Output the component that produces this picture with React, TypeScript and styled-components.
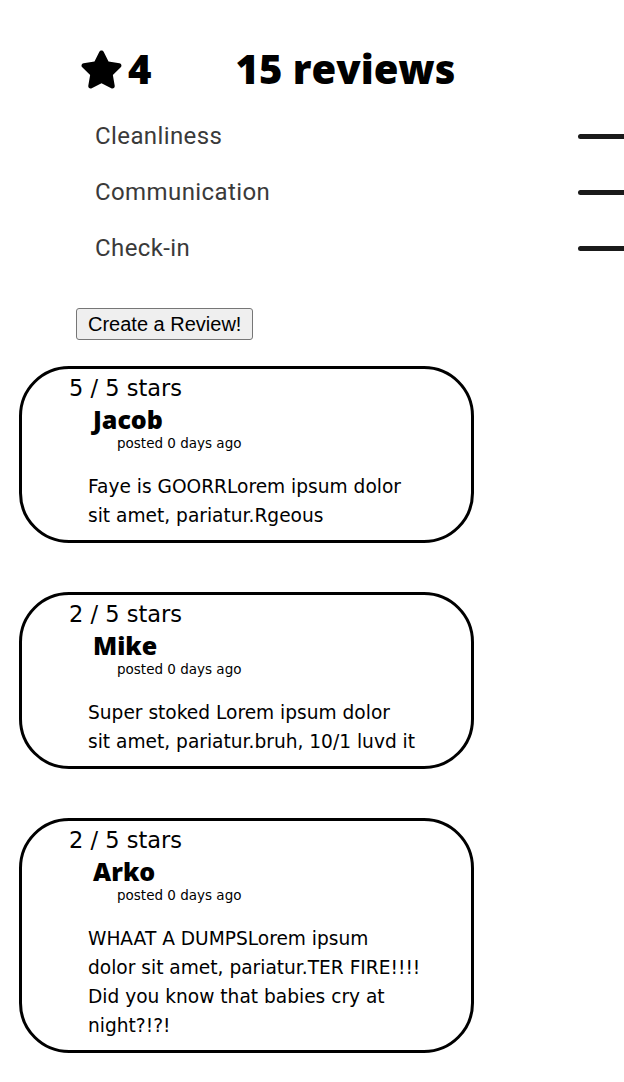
import styled, { createGlobalStyle } from "styled-components";
import { FaStar } from "react-icons/fa";

const GlobalStyle = createGlobalStyle`
    body {
        margin: 0;
        background: #fff;
        color: #000;
        overflow-x: hidden;
    }
`

const categories = ["Cleanliness", "Communication", "Check-in"];

// line breaks kept as in the design
const reviews = [
    { stars: 5, name: "Jacob", body: "Faye is GOORRLorem ipsum dolor\nsit amet, pariatur.Rgeous" },
    { stars: 2, name: "Mike", body: "Super stoked Lorem ipsum dolor\nsit amet, pariatur.bruh, 10/1 luvd it" },
    { stars: 2, name: "Arko", body: "WHAAT A DUMPSLorem ipsum\ndolor sit amet, pariatur.TER FIRE!!!!\nDid you know that babies cry at\nnight?!?!" },
];

export default function App() {
    return (
        <Page>
            <GlobalStyle />
            <Header>
                <Score>
                    <FaStar size={43} />
                    <span>4</span>
                </Score>
                <Count>15 reviews</Count>
            </Header>

            <Categories>
                {categories.map((c) => (
                    <CategoryRow key={c}>
                        <CategoryName>{c}</CategoryName>
                        <Bar />
                    </CategoryRow>
                ))}
            </Categories>

            <CreateButton>Create a Review!</CreateButton>

            <List>
                {reviews.map((r) => (
                    <Card key={r.name}>
                        <Stars>{r.stars} / 5 stars</Stars>
                        <Name>{r.name}</Name>
                        <Posted>posted 0 days ago</Posted>
                        <Body>{r.body}</Body>
                    </Card>
                ))}
            </List>
        </Page>
    )
}

const Page = styled.div`
    padding: 44px 0 30px 19px;
    font-family: "DejaVu Sans", sans-serif;
    overflow: hidden;
`

const Header = styled.div`
    display: flex;
    align-items: center;
    gap: 84px;
    padding-left: 61px;
    font-family: "Open Sans", sans-serif;
    font-weight: 800;
    font-size: 40px;
    line-height: 50px;
`

const Score = styled.div`
    display: flex;
    align-items: center;
    gap: 5px;
`

const Count = styled.div``

const Categories = styled.div`
    display: flex;
    flex-direction: column;
    margin-top: 14px;
    padding-left: 76px;
`

const CategoryRow = styled.div`
    display: flex;
    align-items: center;
    height: 56px;
`

const CategoryName = styled.div`
    width: 483px;
    flex-shrink: 0;
    font-family: "Roboto", sans-serif;
    font-size: 24px;
    letter-spacing: 0.4px;
    color: #3a3a3a;
`

const Bar = styled.div`
    width: 80px;
    height: 5px;
    border-radius: 3px;
    background: #1a1a1a;
    flex-shrink: 0;
`

const CreateButton = styled.button`
    display: block;
    margin: 32px 0 0 57px;
    height: 32px;
    padding: 0 11px;
    font-family: "Liberation Sans", Arial, sans-serif;
    font-size: 20px;
    color: #000;
    background: #efefef;
    border: 1px solid #767676;
    border-radius: 3px;
`

const List = styled.div`
    display: flex;
    flex-direction: column;
    gap: 49px;
    margin-top: 26px;
`

const Card = styled.div`
    width: 455px;
    box-sizing: border-box;
    border: 3px solid #000;
    border-radius: 50px;
    padding: 3px 20px 10px 47px;
`

const Stars = styled.div`
    font-size: 22.5px;
    line-height: 32px;
    font-weight: 400;
`

const Name = styled.div`
    margin-left: 24px;
    font-family: "Open Sans", sans-serif;
    font-weight: 800;
    font-size: 25px;
    line-height: 30px;
`

const Posted = styled.div`
    margin-left: 48px;
    font-size: 13.5px;
    line-height: 18px;
`

const Body = styled.div`
    margin: 20px 0 0 19px;
    white-space: pre-line;
    font-size: 18.6px;
    line-height: 29px;
`
